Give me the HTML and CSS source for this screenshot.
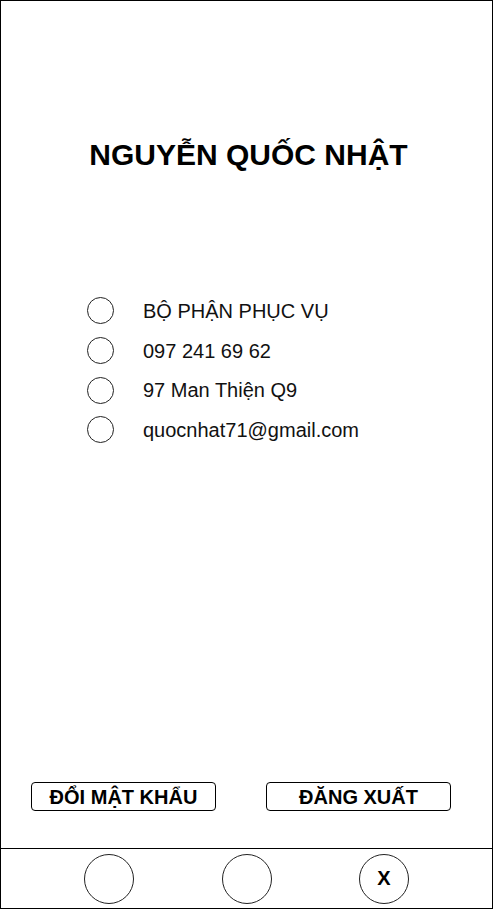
FILE: index.html
```html
<!DOCTYPE html>
<html lang="vi">
<head>
<meta charset="utf-8">
<title>Tài khoản</title>
<link rel="stylesheet" href="styles.css">
</head>
<body>
<div class="screen">
  <h1 class="title">NGUYỄN QUỐC NHẬT</h1>
  <ul class="info">
    <li class="info-row"><span class="dot"></span><span class="info-text">BỘ PHẬN PHỤC VỤ</span></li>
    <li class="info-row"><span class="dot"></span><span class="info-text">097 241 69 62</span></li>
    <li class="info-row"><span class="dot"></span><span class="info-text">97 Man Thiện Q9</span></li>
    <li class="info-row"><span class="dot"></span><span class="info-text">quocnhat71@gmail.com</span></li>
  </ul>
  <div class="spacer"></div>
  <div class="actions">
    <button class="btn">ĐỔI MẬT KHẨU</button>
    <button class="btn">ĐĂNG XUẤT</button>
  </div>
  <nav class="nav">
    <span class="nav-btn"></span>
    <span class="nav-btn"></span>
    <span class="nav-btn">X</span>
  </nav>
</div>
</body>
</html>
```
FILE: styles.css
```css
* { box-sizing: border-box; }
html, body { margin: 0; padding: 0; background: #fff; }
body { font-family: "Liberation Sans", Arial, sans-serif; color: #000; }

.screen {
  width: 493px;
  height: 909px;
  border: 1px solid #000;
  display: flex;
  flex-direction: column;
}

.title {
  margin: 136px 0 0;
  padding-left: 4px;
  font-size: 30px;
  line-height: 36px;
  font-weight: bold;
  text-align: center;
}

.info {
  list-style: none;
  margin: 118px 0 0;
  padding: 0 0 0 86px;
}

.info-row {
  height: 39.7px;
  display: flex;
  align-items: center;
  gap: 29px;
}

.dot {
  width: 27px;
  height: 27px;
  border: 1px solid #222;
  border-radius: 50%;
  flex: none;
}

.info-text {
  font-size: 20px;
  line-height: 24px;
  color: #111;
}

.spacer { flex: 1; }

.actions {
  display: flex;
  justify-content: space-between;
  padding: 0 41px 0 30px;
  margin-bottom: 37px;
}

.btn {
  width: 185px;
  height: 29px;
  border: 1px solid #000;
  border-radius: 4px;
  background: #fff;
  font-family: "Liberation Sans", Arial, sans-serif;
  font-size: 20px;
  font-weight: bold;
  color: #000;
  padding: 2px 0 0;
  line-height: 25px;
}

.nav {
  height: 60px;
  border-top: 1px solid #000;
  display: flex;
  justify-content: center;
  align-items: center;
  gap: 87.5px;
}

.nav-btn {
  width: 50px;
  height: 50px;
  border: 1px solid #222;
  border-radius: 50%;
  display: flex;
  align-items: center;
  justify-content: center;
  font-size: 20px;
  font-weight: bold;
}
```
